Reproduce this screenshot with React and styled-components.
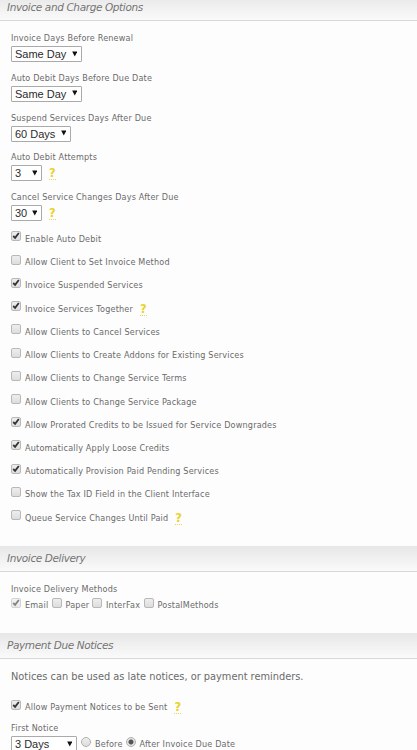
import React from 'react';
import styled, { createGlobalStyle } from 'styled-components';

const intervals = [
	{ label: 'Invoice Days Before Renewal', value: 'Same Day', width: 71 },
	{ label: 'Auto Debit Days Before Due Date', value: 'Same Day', width: 71 },
	{ label: 'Suspend Services Days After Due', value: '60 Days', width: 60 },
	{ label: 'Auto Debit Attempts', value: '3', width: 31, help: true },
	{ label: 'Cancel Service Changes Days After Due', value: '30', width: 31, help: true },
];

const options = [
	{ label: 'Enable Auto Debit', checked: true },
	{ label: 'Allow Client to Set Invoice Method' },
	{ label: 'Invoice Suspended Services', checked: true },
	{ label: 'Invoice Services Together', checked: true, help: true },
	{ label: 'Allow Clients to Cancel Services' },
	{ label: 'Allow Clients to Create Addons for Existing Services' },
	{ label: 'Allow Clients to Change Service Terms' },
	{ label: 'Allow Clients to Change Service Package' },
	{ label: 'Allow Prorated Credits to be Issued for Service Downgrades', checked: true },
	{ label: 'Automatically Apply Loose Credits', checked: true },
	{ label: 'Automatically Provision Paid Pending Services', checked: true },
	{ label: 'Show the Tax ID Field in the Client Interface' },
	{ label: 'Queue Service Changes Until Paid', help: true },
];

const methods = [
	{ label: 'Email', checked: true, disabled: true, width: 40.5 },
	{ label: 'Paper', width: 40.5 },
	{ label: 'InterFax', width: 51.5 },
	{ label: 'PostalMethods', width: 75 },
];

const Check = ({ checked, disabled }) => (
	<Box role="checkbox" aria-checked={!!checked} disabled={disabled}>
		{checked && (
			<Tick viewBox="0 0 10 10">
				<path d="M2.2 5 L4.1 6.8 L7.8 2" />
			</Tick>
		)}
	</Box>
);

const Dropdown = ({ value, width }) => (
	<Select width={width}>
		<span>{value}</span>
		<Arrow viewBox="0 0 6 6">
			<path d="M0.2 0.3h5.6L3 5.8z" />
		</Arrow>
	</Select>
);

const App = () => (
	<Page>
		<GlobalStyle />
		<Header>Invoice and Charge Options</Header>
		<Body height={525}>
			{intervals.map((item) => (
				<Field key={item.label}>
					<Label>{item.label}</Label>
					<Controls>
						<Dropdown value={item.value} width={item.width} />
						{item.help && <Help>?</Help>}
					</Controls>
				</Field>
			))}
			{options.map((item) => (
				<Option key={item.label}>
					<Check checked={item.checked} />
					<OptionText>{item.label}</OptionText>
					{item.help && <Help>?</Help>}
				</Option>
			))}
		</Body>
		<Header>Invoice Delivery</Header>
		<Body height={61}>
			<Label>Invoice Delivery Methods</Label>
			<Methods>
				{methods.map((item) => (
					<Method key={item.label} width={item.width}>
						<Check checked={item.checked} disabled={item.disabled} />
						<OptionText>{item.label}</OptionText>
					</Method>
				))}
			</Methods>
		</Body>
		<Header>Payment Due Notices</Header>
		<Body height={120}>
			<Intro>Notices can be used as late notices, or payment reminders.</Intro>
			<Option>
				<Check checked />
				<OptionText>Allow Payment Notices to be Sent</OptionText>
				<Help>?</Help>
			</Option>
			<Label>First Notice</Label>
			<Controls>
				<Dropdown value="3 Days" width={66} />
				<Choices>
					<Choice width={44.5}>
						<Radio />
						<OptionText>Before</OptionText>
					</Choice>
					<Choice>
						<Radio checked />
						<OptionText>After Invoice Due Date</OptionText>
					</Choice>
				</Choices>
			</Controls>
		</Body>
	</Page>
);

export default App;

const GlobalStyle = createGlobalStyle`
	body {
		margin: 0;
		background: #fdfdfd;
		overflow: hidden;
	}
`;

const Page = styled.div`
	height: 750px;
	overflow: hidden;
	color: #6a6a6a;
	font-family: 'DejaVu Sans', Verdana, sans-serif;
	font-size: 8.1px;
	white-space: nowrap;

	/* The list is scrolled a little past the first heading's top edge */
	& > :nth-child(1) {
		margin-top: -5px;
	}
`;

const Header = styled.div`
	height: 26px;
	box-sizing: border-box;
	padding-left: 7px;
	border-bottom: 1px solid #d8d8d8;
	background: linear-gradient(#e7e7e7, #fafafa);
	color: #747474;
	font-size: 10.5px;
	line-height: 24px;
	letter-spacing: -0.38px;
	font-style: italic;
`;

const Body = styled.div`
	height: ${({ height }) => height}px;
	box-sizing: border-box;
	padding: 11px 0 0 11px;
`;

const Field = styled.div`
	height: 39.8px;
`;

const Label = styled.div`
	height: 14px;
	line-height: 13px;
	letter-spacing: 0.17px;
`;

const Controls = styled.div`
	display: flex;
	align-items: flex-start;
`;

const Select = styled.div`
	display: flex;
	align-items: center;
	justify-content: space-between;
	box-sizing: border-box;
	width: ${({ width }) => width}px;
	height: 16px;
	padding: 0 4px 0 3px;
	border: 1px solid #aaa;
	border-radius: 1px;
	background: #fff;
	color: #2b2b2b;
	font: 11px/14px 'Liberation Sans', Arial, sans-serif;
`;

const Arrow = styled.svg`
	width: 5.5px;
	height: 6px;
	margin-top: -1px;
	fill: #111;
`;

const Help = styled.span`
	height: 13px;
	margin: 1px 0 0 7px;
	border-bottom: 1px dotted #e8d755;
	color: #e8d22e;
	font-size: 11.5px;
	font-weight: bold;
	line-height: 14px;
`;

const Option = styled.div`
	display: flex;
	align-items: flex-start;
	height: 23.23px;
`;

const OptionText = styled.span`
	margin: 2px 0 0 4px;
	line-height: 12px;
	letter-spacing: 0.18px;
`;

const Box = styled.span`
	flex: none;
	box-sizing: border-box;
	width: 10px;
	height: 10px;
	margin-top: 0.5px;
	border: 1px solid #b8b8b8;
	border-radius: 2px;
	background: linear-gradient(#eee, #ddd);
	opacity: ${({ disabled }) => (disabled ? 0.6 : 1)};
`;

const Tick = styled.svg`
	display: block;
	width: 10px;
	height: 10px;
	margin: -1px;
	fill: none;
	stroke: #333;
	stroke-width: 1.8;
`;

const Methods = styled.div`
	display: flex;
`;

const Method = styled.span`
	display: flex;
	width: ${({ width }) => width}px;
`;

const Intro = styled.div`
	height: 29px;
	font-size: 9.8px;
	line-height: 14px;
`;

const Choices = styled.div`
	display: flex;
	padding-left: 4px;
`;

const Choice = styled.span`
	display: flex;
	width: ${({ width }) => (width ? `${width}px` : 'auto')};
`;

const Radio = styled.span`
	flex: none;
	box-sizing: border-box;
	width: 10px;
	height: 10px;
	margin-top: 0.5px;
	border: 1px solid #b0b0b0;
	border-radius: 50%;
	background: ${({ checked }) =>
		checked ? 'radial-gradient(#555 0 2px, #e4e4e4 3px)' : 'linear-gradient(#eee, #ddd)'};
`;
